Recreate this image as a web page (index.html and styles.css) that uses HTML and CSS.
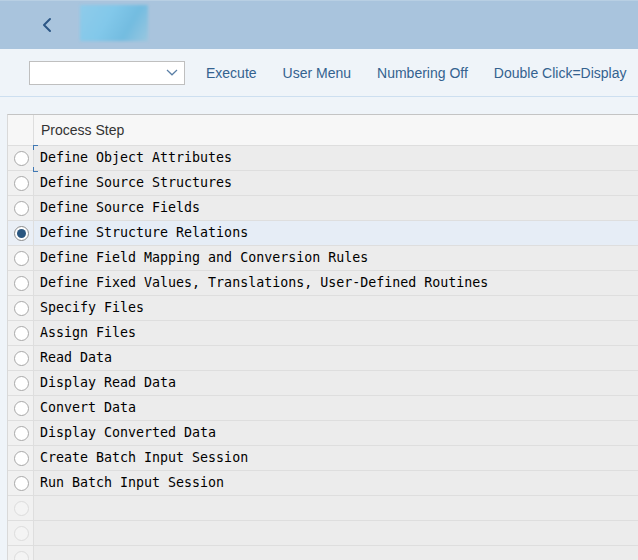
FILE: index.html
```html
<!DOCTYPE html>
<html>
<head>
<meta charset="utf-8">
<link rel="stylesheet" href="styles.css">
</head>
<body>
<header class="shell">
  <button class="back" aria-label="Back">
    <svg width="14" height="16" viewBox="0 0 14 16"><path d="M9 2 L3 8 L9 14" fill="none" stroke="#2c5786" stroke-width="2" stroke-linecap="round" stroke-linejoin="round"/></svg>
  </button>
  <div class="logo"></div>
</header>
<div class="toolbar">
  <div class="select">
    <svg width="12" height="7" viewBox="0 0 12 7"><path d="M1 1 L6 5.8 L11 1" fill="none" stroke="#5a7fa6" stroke-width="1.2"/></svg>
  </div>
  <span class="tb">Execute</span>
  <span class="tb">User Menu</span>
  <span class="tb">Numbering Off</span>
  <span class="tb">Double Click=Display</span>
</div>
<div class="table">
  <div class="row head"><div class="sel"></div><div class="cell">Process Step</div></div>
  <div class="row"><div class="sel"><span class="radio"></span></div><div class="cell focus">Define Object Attributes</div></div>
  <div class="row"><div class="sel"><span class="radio"></span></div><div class="cell">Define Source Structures</div></div>
  <div class="row"><div class="sel"><span class="radio"></span></div><div class="cell">Define Source Fields</div></div>
  <div class="row active"><div class="sel"><span class="radio on"></span></div><div class="cell">Define Structure Relations</div></div>
  <div class="row"><div class="sel"><span class="radio"></span></div><div class="cell">Define Field Mapping and Conversion Rules</div></div>
  <div class="row"><div class="sel"><span class="radio"></span></div><div class="cell">Define Fixed Values, Translations, User-Defined Routines</div></div>
  <div class="row"><div class="sel"><span class="radio"></span></div><div class="cell">Specify Files</div></div>
  <div class="row"><div class="sel"><span class="radio"></span></div><div class="cell">Assign Files</div></div>
  <div class="row"><div class="sel"><span class="radio"></span></div><div class="cell">Read Data</div></div>
  <div class="row"><div class="sel"><span class="radio"></span></div><div class="cell">Display Read Data</div></div>
  <div class="row"><div class="sel"><span class="radio"></span></div><div class="cell">Convert Data</div></div>
  <div class="row"><div class="sel"><span class="radio"></span></div><div class="cell">Display Converted Data</div></div>
  <div class="row"><div class="sel"><span class="radio"></span></div><div class="cell">Create Batch Input Session</div></div>
  <div class="row"><div class="sel"><span class="radio"></span></div><div class="cell">Run Batch Input Session</div></div>
  <div class="row"><div class="sel"><span class="radio off"></span></div><div class="cell"></div></div>
  <div class="row"><div class="sel"><span class="radio off"></span></div><div class="cell"></div></div>
  <div class="row"><div class="sel"><span class="radio off"></span></div><div class="cell"></div></div>
</div>
</body>
</html>
```
FILE: styles.css
```css
html, body {
  margin: 0;
  padding: 0;
  background: #eff4f9;
  overflow: hidden;
}
body {
  width: 638px;
  height: 560px;
  font-family: "Liberation Sans", Arial, sans-serif;
}
.shell {
  height: 48px;
  background: #a9c4dd;
  border-top: 1px solid #b8cfe3;
  display: flex;
  align-items: center;
}
.back {
  margin-left: 40px;
  width: 16px;
  height: 20px;
  padding: 0;
  border: 0;
  background: transparent;
  display: flex;
  align-items: center;
  justify-content: center;
  margin-top: -1px;
}
.logo {
  margin-left: 24px;
  width: 68px;
  height: 36px;
  margin-top: -5px;
  background: linear-gradient(120deg, #8fcbea 0%, #82c8ea 40%, #73bce0 70%, #9ac7df 100%);
  filter: blur(1.5px);
}
.toolbar {
  height: 47px;
  border-bottom: 1px solid #cddff0;
  display: flex;
  align-items: center;
  padding-left: 29px;
  gap: 26px;
}
.select {
  width: 148px;
  height: 22px;
  background: #fff;
  border: 1px solid #bfbfbf;
  display: flex;
  align-items: center;
  justify-content: flex-end;
  padding-right: 6px;
  box-sizing: content-box;
  margin-right: -5px;
}
.tb {
  font-size: 14px;
  color: #34628f;
  line-height: 16px;
}
.table {
  margin-top: 17px;
  margin-left: 7px;
  border-top: 1px solid #c4c4c4;
  border-left: 1px solid #d9d9d9;
}
.row {
  display: grid;
  grid-template-columns: 26px 1fr;
  height: 25px;
  box-sizing: border-box;
  border-bottom: 1px solid #dedede;
  background: #ececec;
}
.row.head {
  height: 31px;
  background: #f7f7f7;
}
.row.head .sel { background: #f7f7f7; }
.row.head .cell {
  font-family: "Liberation Sans", Arial, sans-serif;
  font-size: 14px;
  color: #333;
  padding-left: 7px;
  padding-top: 0;
}
.row.active { background: #e6edf6; }
.row.active .sel { background: #eaeff6; }
.sel {
  border-right: 1px solid #dedede;
  background: #f1f1f1;
  display: flex;
  align-items: center;
  justify-content: center;
}
.cell {
  position: relative;
  display: flex;
  align-items: center;
  padding-left: 6px;
  padding-bottom: 1px;
  font-family: "DejaVu Sans Mono", "Liberation Mono", monospace;
  font-size: 13.3px;
  color: #000;
  white-space: nowrap;
}
.cell.focus::before,
.cell.focus::after {
  content: "";
  position: absolute;
  left: -1px;
  width: 4px;
  height: 4px;
  border-left: 1px solid #3f78b4;
}
.cell.focus::before {
  top: -1px;
  border-top: 1px solid #3f78b4;
}
.cell.focus::after {
  bottom: -2px;
  border-bottom: 1px solid #3f78b4;
}
.radio {
  width: 13px;
  height: 13px;
  border-radius: 50%;
  border: 1px solid #a8a8a8;
  background: #fff;
  display: block;
  position: relative;
  margin-left: 1px;
}
.radio.on {
  border-color: #8a8a8a;
}
.radio.on::after {
  content: "";
  position: absolute;
  left: 2px;
  top: 2px;
  width: 9px;
  height: 9px;
  border-radius: 50%;
  background: #2a5680;
}
.radio.off {
  border-color: #dcdcdc;
  background: #f4f4f4;
}
```
